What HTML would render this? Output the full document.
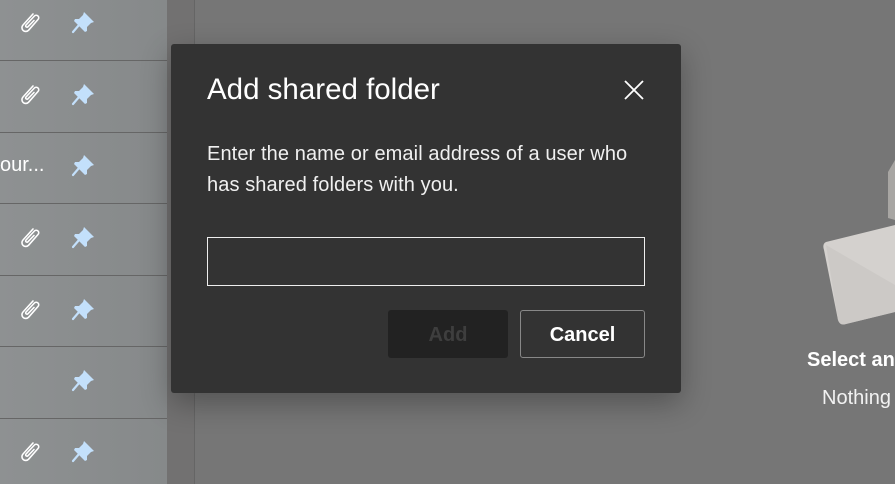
<!DOCTYPE html>
<html><head><meta charset="utf-8"><style>
*{margin:0;padding:0;box-sizing:border-box}
body{width:895px;height:484px;overflow:hidden;background:#767676;font-family:"Segoe UI","Liberation Sans",sans-serif;position:relative}
.left{position:absolute;left:0;top:0;width:167px;height:484px;background:linear-gradient(90deg,#8e9192,#86898a);}
.sep{position:absolute;left:0;width:167px;height:1px;background:#666}
.mid{position:absolute;left:167px;top:0;width:27px;height:484px;background:#727171}
.vl{position:absolute;left:194px;top:0;width:1px;height:484px;background:#656565}
.dlg{position:absolute;left:171px;top:44px;width:510px;height:349px;background:#333;border-radius:3px;box-shadow:0 10px 30px rgba(0,0,0,.3);color:#fff}
.t{position:absolute;left:36px;top:29px;font-size:29.5px;font-weight:400}
.p{position:absolute;left:36px;top:95px;font-size:20px;line-height:31px;color:#f0f0f0;width:440px;letter-spacing:.1px}
.in{position:absolute;left:36px;top:193px;width:438px;height:49px;border:1px solid #eee}
.b1{position:absolute;left:217px;top:266px;width:120px;height:48px;background:#222;border-radius:3px;color:#3e3e3e;font-size:20px;font-weight:bold;text-align:center;line-height:50px}
.b2{position:absolute;left:349px;top:266px;width:125px;height:48px;border:1px solid #888;border-radius:3px;font-size:20px;font-weight:bold;text-align:center;line-height:49px}
.x{position:absolute;left:452px;top:35px}
</style></head><body>
<div class="left"></div>
<div class="mid"></div><div class="vl"></div>
<div class="sep" style="top:60px"></div>
<div class="sep" style="top:132px"></div>
<div class="sep" style="top:203px"></div>
<div class="sep" style="top:275px"></div>
<div class="sep" style="top:346px"></div>
<div class="sep" style="top:418px"></div>
<div style="position:absolute;left:0;top:154px;color:#fff;font-size:20px">our...</div>
<svg width="895" height="484" style="position:absolute;left:0;top:0">
<defs>
<g id="c"><path d="M14 3 L4 14 a3.8 3.8 0 0 0 5.5 5.3 L19 8.5 a2.5 2.5 0 0 0 -3.6 -3.5 L7 14 a1.3 1.3 0 0 0 1.9 1.8 L15 9.5" fill="none" stroke="#fff" stroke-width="1.6" stroke-linecap="round"/></g>
<g id="p"><path d="M13 1 L23 11 L20 12 L16 16 L16 20 L14 21 L3 10 L4 8 L8 8 L12 4 Z" fill="#c3e0fb"/><path d="M8 14 L2 21" stroke="#c3e0fb" stroke-width="2.2" stroke-linecap="round"/></g>
</defs>
<use href="#c" x="19" y="11"/><use href="#p" x="71" y="11"/>
<use href="#c" x="19" y="83"/><use href="#p" x="71" y="83"/>
<use href="#p" x="71" y="154"/>
<use href="#c" x="19" y="226"/><use href="#p" x="71" y="226"/>
<use href="#c" x="19" y="298"/><use href="#p" x="71" y="298"/>
<use href="#p" x="71" y="369"/>
<use href="#c" x="19" y="440"/><use href="#p" x="71" y="440"/>
<path d="M888 172 L895 160 L895 220 L888 218 Z" fill="#a8a6a3"/>
<path d="M826 242 Q822 244 824 250 L838 320 Q840 326 846 324 L895 312 L895 225 Z" fill="#d4d1ce"/>
<path d="M826 245 L895 285 L895 312 L846 324 Q840 326 838 320 Z" fill="#c9c6c3" opacity=".7"/>
</svg>
<div style="position:absolute;left:807px;top:349px;color:#fff;font-size:20px;font-weight:bold;white-space:nowrap">Select an</div>
<div style="position:absolute;left:822px;top:387px;color:#f2f2f2;font-size:20px;white-space:nowrap">Nothing</div>
<div class="dlg">
<div class="t">Add shared folder</div>
<svg class="x" width="22" height="22"><path d="M2 2 L20 20 M20 2 L2 20" stroke="#fff" stroke-width="1.8"/></svg>
<div class="p">Enter the name or email address of a user who has shared folders with you.</div>
<div class="in"></div>
<div class="b1">Add</div>
<div class="b2">Cancel</div>
</div>
</body></html>
